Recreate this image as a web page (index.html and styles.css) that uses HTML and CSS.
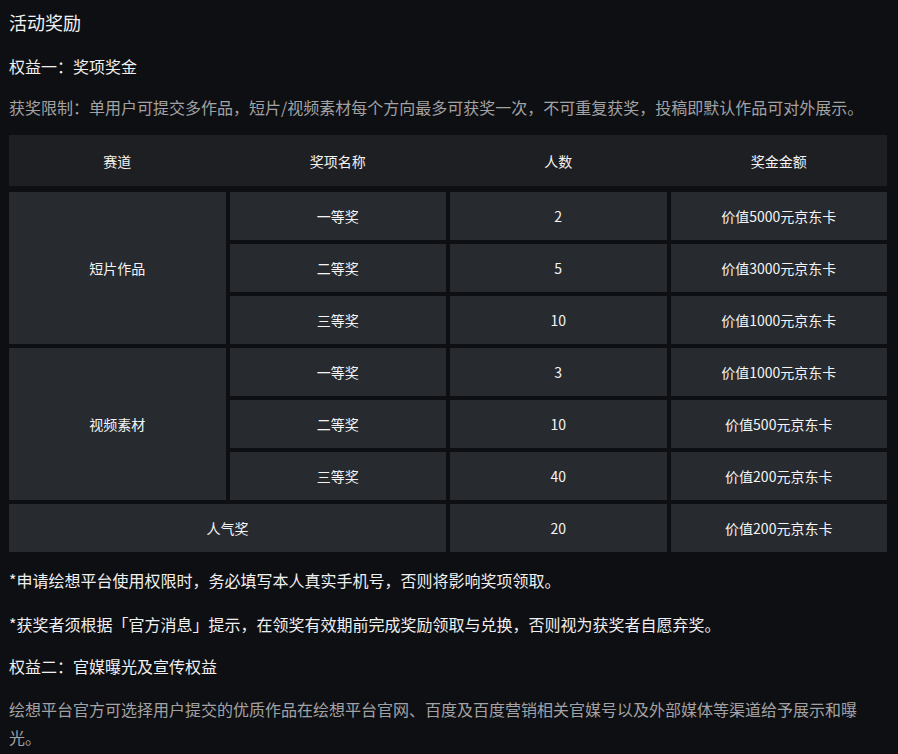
FILE: index.html
```html
<!DOCTYPE html>
<html lang="zh-CN">
<head>
<meta charset="utf-8">
<title>活动奖励</title>
<link rel="stylesheet" href="styles.css">
</head>
<body>
<div class="page">
  <h1 class="title">活动奖励</h1>
  <p class="sub sub-first">权益一：奖项奖金</p>
  <p class="muted muted-first">获奖限制：单用户可提交多作品，短片/视频素材每个方向最多可获奖一次，不可重复获奖，投稿即默认作品可对外展示。</p>

  <div class="table">
    <div class="thead">
      <div class="th">赛道</div>
      <div class="th">奖项名称</div>
      <div class="th">人数</div>
      <div class="th">奖金金额</div>
    </div>
    <div class="tbody">
      <div class="td span-rows">短片作品</div>
      <div class="td">一等奖</div>
      <div class="td">2</div>
      <div class="td">价值5000元京东卡</div>
      <div class="td">二等奖</div>
      <div class="td">5</div>
      <div class="td">价值3000元京东卡</div>
      <div class="td">三等奖</div>
      <div class="td">10</div>
      <div class="td">价值1000元京东卡</div>

      <div class="td span-rows">视频素材</div>
      <div class="td">一等奖</div>
      <div class="td">3</div>
      <div class="td">价值1000元京东卡</div>
      <div class="td">二等奖</div>
      <div class="td">10</div>
      <div class="td">价值500元京东卡</div>
      <div class="td">三等奖</div>
      <div class="td">40</div>
      <div class="td">价值200元京东卡</div>

      <div class="td span-cols">人气奖</div>
      <div class="td">20</div>
      <div class="td">价值200元京东卡</div>
    </div>
  </div>

  <p class="note note-first">*申请绘想平台使用权限时，务必填写本人真实手机号，否则将影响奖项领取。</p>
  <p class="note note-second">*获奖者须根据「官方消息」提示，在领奖有效期前完成奖励领取与兑换，否则视为获奖者自愿弃奖。</p>
  <p class="sub sub-second">权益二：官媒曝光及宣传权益</p>
  <p class="muted muted-last">绘想平台官方可选择用户提交的优质作品在绘想平台官网、百度及百度营销相关官媒号以及外部媒体等渠道给予展示和曝光。</p>
</div>
</body>
</html>
```

FILE: styles.css
```css
* { box-sizing: border-box; }

html, body {
  margin: 0;
  padding: 0;
  background: #0e0f13;
}

body {
  font-family: "Noto Sans CJK SC", "Noto Sans", sans-serif;
  color: #ececec;
}

.page {
  width: 896px;
  padding: 8px 9px 0 9px;
}

.title {
  margin: 0;
  font-size: 18px;
  line-height: 28px;
  font-weight: 400;
  color: #f2f2f2;
}

.sub {
  margin: 0;
  font-size: 16px;
  line-height: 28px;
  font-weight: 400;
  color: #f0f0f0;
}

.sub-first { margin-top: 16px; }
.sub-second { margin-top: 14px; }

.muted {
  margin: 0;
  font-size: 16px;
  line-height: 28px;
  color: #a2a2a4;
}

.muted-first { margin-top: 13px; }
.muted-last { margin-top: 15px; width: 878px; }

.note {
  margin: 0;
  font-size: 16px;
  line-height: 28px;
  color: #f0f0f0;
}

.note-first { margin-top: 14px; }
.note-second { margin-top: 16px; }

.table {
  margin-top: 14px;
  width: 878px;
}

.thead {
  display: grid;
  grid-template-columns: repeat(4, 1fr);
  column-gap: 4px;
  height: 51px;
  background: #1e1f23;
}

.th {
  display: flex;
  align-items: center;
  justify-content: center;
  font-size: 14px;
  font-weight: 400;
  color: #f4f4f4;
}

.tbody {
  margin-top: 6px;
  display: grid;
  grid-template-columns: repeat(4, 1fr);
  grid-auto-rows: 48px;
  gap: 4px;
}

.td {
  display: flex;
  align-items: center;
  justify-content: center;
  background: #272a2f;
  font-size: 14px;
  color: #f4f4f4;
}

.span-rows { grid-row: span 3; }
.span-cols { grid-column: span 2; }
```
